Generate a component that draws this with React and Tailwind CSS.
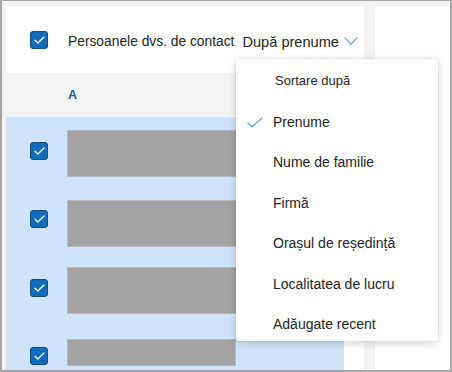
import React from "react";

const font = { fontFamily: '"Liberation Sans", Arial, sans-serif' };

function Check({ className = "" }) {
    return (
        <span className={`w-[18px] h-[18px] shrink-0 rounded-[3px] bg-[#0f6cbd] border border-[#174a7c] flex items-center justify-center ${className}`}>
            <svg width="11" height="8" viewBox="0 0 11 8" fill="none">
                <path d="M1 4.2L3.9 7L10 1" stroke="white" strokeWidth="1.3" strokeLinecap="round" strokeLinejoin="round" />
            </svg>
        </span>
    );
}

const rows = [
    { mt: "mt-[13px]", box: "mt-[12px]", bar: "w-[200px] h-[47px]" },
    { mt: "mt-[23px]", box: "mt-[10px]", bar: "w-[200px] h-[47px]" },
    { mt: "mt-[20px]", box: "mt-[12px]", bar: "w-[200px] h-[47px]" },
    { mt: "mt-[25px]", box: "mt-[8px]", bar: "w-[169px] h-[27px] -ml-[1px]" },
];

const sortOptions = [
    "Prenume",
    "Nume de familie",
    "Firmă",
    "Orașul de reședință",
    "Localitatea de lucru",
    "Adăugate recent",
];

export default function App() {
    return (
        <div style={font} className="relative w-[452px] h-[372px] overflow-hidden border-2 border-t border-[#a6a6a6] bg-[#f3f3f3] flex gap-[11px] pt-[5px] pl-[4px] text-[#242424]">
            {/* Contacts list */}
            <div className="w-[358px] flex flex-col">
                {/* Header */}
                <div className="h-[67px] shrink-0 bg-white rounded-t-[4px] flex items-center pl-[24px]">
                    <Check />
                    <span className="ml-[20px] pt-[6px] text-[13.8px] whitespace-nowrap">Persoanele dvs. de contact</span>
                    <span className="ml-[8px] pt-[6px] text-[14.6px] whitespace-nowrap">După prenume</span>
                    <svg className="ml-[5px] mt-[3px]" width="14" height="8" viewBox="0 0 14 8" fill="none">
                        <path d="M1 1L7 7L13 1" stroke="#6fa3da" strokeWidth="1.2" strokeLinecap="round" strokeLinejoin="round" />
                    </svg>
                </div>

                {/* Letter group */}
                <div className="h-[44px] shrink-0 bg-[#f4f4f4] flex items-center pl-[62px]">
                    <span className="text-[12.5px] font-bold text-[#1160a8]">A</span>
                </div>

                {/* Selected rows */}
                <div className="flex-1 flex">
                    <div className="w-[338px] bg-[#cfe4fa] flex flex-col overflow-hidden">
                        {rows.map((r, i) => (
                            <div key={i} className={`flex items-start pl-[24px] ${r.mt}`}>
                                <Check className={r.box} />
                                <div className={`ml-[19px] bg-[#a3a3a3] border border-[#b9b9b9] ${r.bar}`} />
                            </div>
                        ))}
                    </div>
                    <div className="flex-1 bg-white" />
                </div>
            </div>

            {/* Side panel */}
            <div className="w-[75px] bg-white rounded-tl-[4px]" />

            {/* Sort menu */}
            <div className="absolute left-[234px] top-[58px] w-[202px] h-[282px] overflow-hidden bg-white rounded-[4px] shadow-[0_2px_8px_rgba(0,0,0,0.18),0_0_2px_rgba(0,0,0,0.12)]">
                <div className="h-[43px] flex items-center pl-[39px] text-[13px]">Sortare după</div>
                {sortOptions.map((o, i) => (
                    <div key={o} className="h-[40.5px] flex items-center relative pl-[37px] text-[14px] whitespace-nowrap">
                        {i === 0 && (
                            <svg className="absolute left-[11px] top-[15px]" width="16" height="11" viewBox="0 0 16 11" fill="none">
                                <path d="M1 6L5 10L15 1" stroke="#5f9bd6" strokeWidth="1.2" strokeLinecap="round" strokeLinejoin="round" />
                            </svg>
                        )}
                        {o}
                    </div>
                ))}
            </div>
        </div>
    );
}
